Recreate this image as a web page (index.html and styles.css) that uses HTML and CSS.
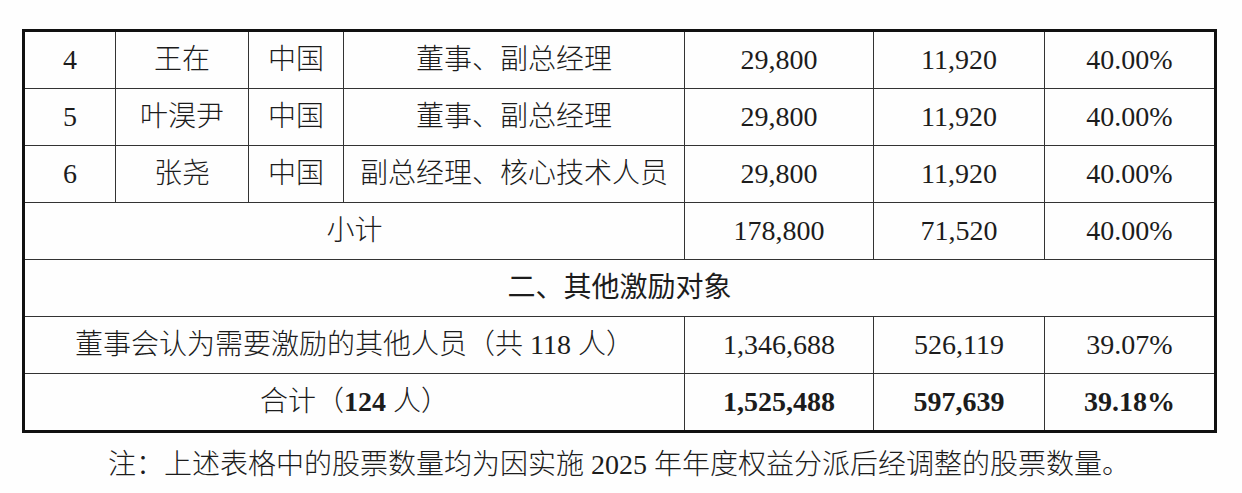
FILE: index.html
```html
<!DOCTYPE html>
<html lang="zh-CN">
<head>
<meta charset="utf-8">
<title>激励对象股票数量表</title>
<link rel="stylesheet" href="styles.css">
</head>
<body>
<div class="page">
  <table class="grid">
    <colgroup>
      <col class="c1"><col class="c2"><col class="c3"><col class="c4"><col class="c5"><col class="c6"><col class="c7">
    </colgroup>
    <tbody>
      <tr>
        <td>4</td><td>王在</td><td>中国</td><td>董事、副总经理</td><td>29,800</td><td>11,920</td><td class="last">40.00%</td>
      </tr>
      <tr>
        <td>5</td><td>叶淏尹</td><td>中国</td><td>董事、副总经理</td><td>29,800</td><td>11,920</td><td class="last">40.00%</td>
      </tr>
      <tr>
        <td>6</td><td>张尧</td><td>中国</td><td>副总经理、核心技术人员</td><td>29,800</td><td>11,920</td><td class="last">40.00%</td>
      </tr>
      <tr>
        <td colspan="4">小计</td><td>178,800</td><td>71,520</td><td class="last">40.00%</td>
      </tr>
      <tr>
        <td colspan="7" class="last section">二、其他激励对象</td>
      </tr>
      <tr>
        <td colspan="4">董事会认为需要激励的其他人员（共 118 人）</td><td>1,346,688</td><td>526,119</td><td class="last">39.07%</td>
      </tr>
      <tr class="total">
        <td colspan="4">合计（<b>124</b> 人）</td><td><b>1,525,488</b></td><td><b>597,639</b></td><td class="last"><b>39.18%</b></td>
      </tr>
    </tbody>
  </table>
  <p class="note">注：上述表格中的股票数量均为因实施 2025 年年度权益分派后经调整的股票数量。</p>
</div>
</body>
</html>
```
FILE: styles.css
```css
html, body {
  margin: 0;
  padding: 0;
  background: #fefefe;
}

.page {
  padding: 29px 0 0 22px;
  color: #1c1c1c;
  font-family: "Liberation Serif", "Noto Sans CJK SC", serif;
  font-weight: 300;
}

.grid {
  width: 1195px;
  table-layout: fixed;
  border-collapse: separate;
  border-spacing: 0;
  border: 3px solid #111;
  box-sizing: border-box;
  font-size: 28px;
}

.c1 { width: 91px; }
.c2 { width: 133px; }
.c3 { width: 95px; }
.c4 { width: 341px; }
.c5 { width: 189px; }
.c6 { width: 171px; }
.c7 { width: 169px; }

.grid td {
  box-sizing: border-box;
  height: 57px;
  padding: 0;
  text-align: center;
  vertical-align: middle;
  border-right: 1px solid #333;
  border-bottom: 1px solid #333;
  white-space: nowrap;
  line-height: 1;
}

.grid td.last {
  border-right: none;
}

.grid tr.total td {
  border-bottom: none;
  height: 56px;
}

.grid b {
  font-weight: bold;
}

.section {
  font-weight: 400;
}

.note {
  margin: 14px 0 0 86px;
  font-size: 28px;
  line-height: 36px;
}
```
